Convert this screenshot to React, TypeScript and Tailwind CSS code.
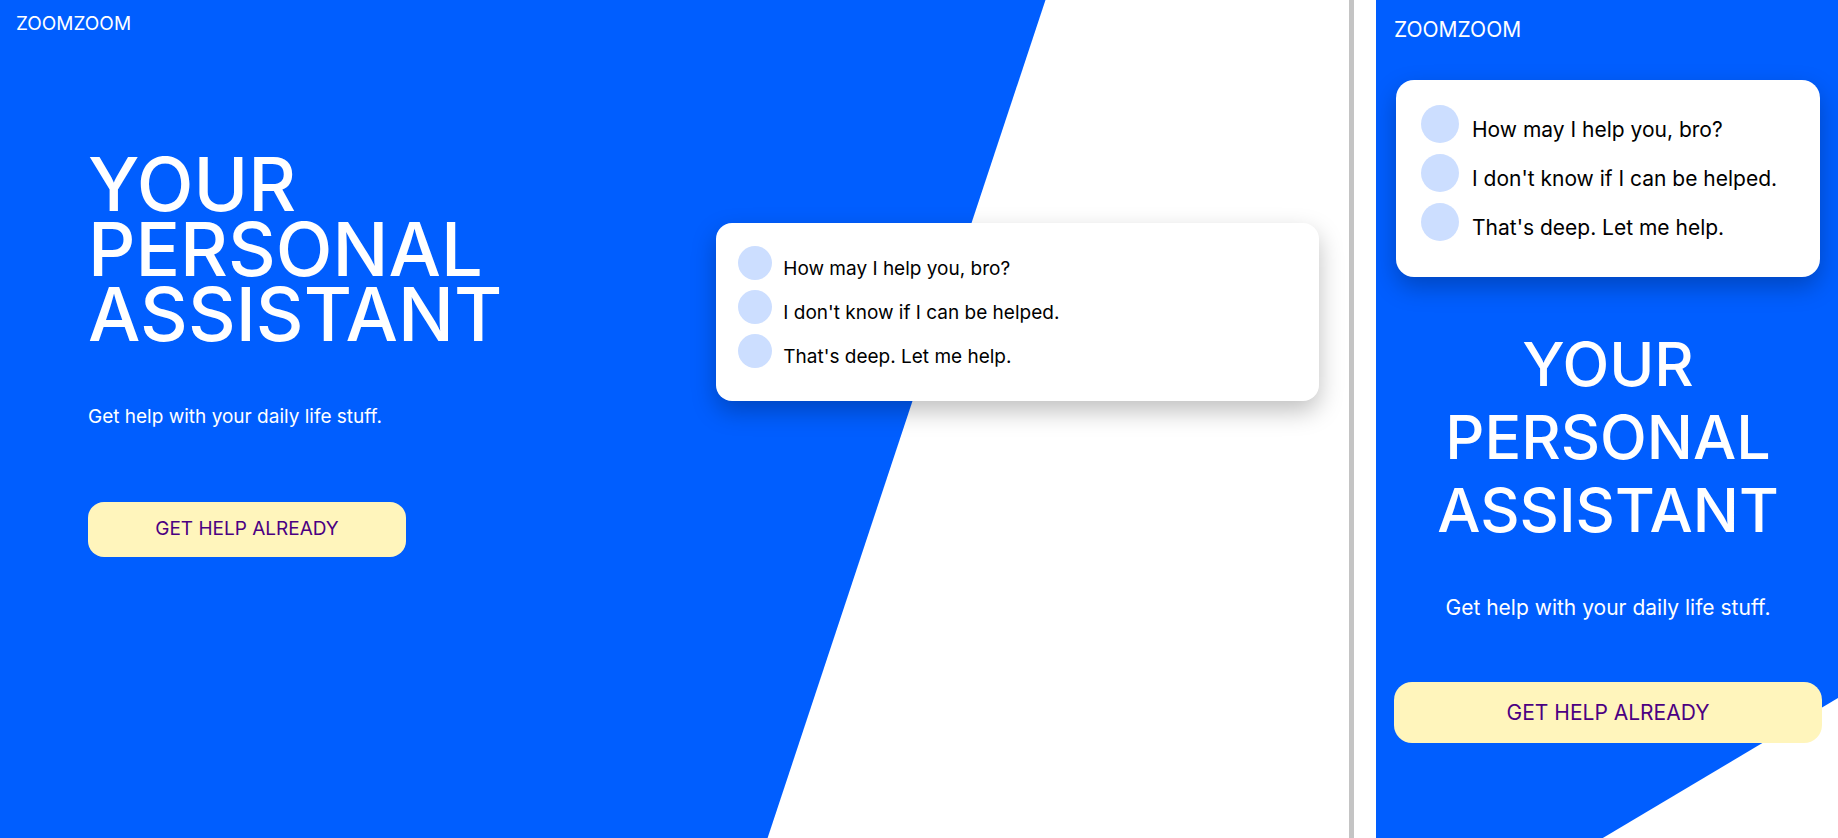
const messages = [
  "How may I help you, bro?",
  "I don't know if I can be helped.",
  "That's deep. Let me help.",
];

function DesktopHero() {
  return (
    <section className="relative isolate flex min-w-0 flex-1 flex-col overflow-hidden bg-white">
      <div className="absolute inset-0 -z-10 bg-[#005eff] [clip-path:polygon(0_0,77.5%_0,56.9%_100%,0_100%)]" />
      <header className="px-4 pt-3 text-[19px] leading-6 text-white">ZOOMZOOM</header>
      <div className="flex items-start">
        <div className="w-[53.1%] pt-[116px] pl-[88px] text-white">
          <h1 className="text-[74px] leading-[65px] font-medium">
            YOUR
            <br />
            PERSONAL
            <br />
            ASSISTANT
          </h1>
          <p className="mt-[58px] text-[19px] leading-6">Get help with your daily life stuff.</p>
          <button
            type="button"
            className="mt-[73px] h-[55px] w-[318px] rounded-2xl bg-[#fff5bc] text-[19px] text-[#4b0082]"
          >
            GET HELP ALREADY
          </button>
        </div>
        <ul className="mt-[187px] mr-[30px] flex flex-1 flex-col gap-[10px] rounded-2xl bg-white px-[22px] pt-[23px] pb-[33px] text-[19px] leading-6 text-black shadow-[0_10px_25px_rgba(0,0,0,0.25)]">
          {messages.map((message) => (
            <li key={message} className="flex h-[34px] items-start gap-[11px]">
              <span className="size-[34px] shrink-0 rounded-full bg-[#ccdeff]" />
              <span className="pt-[11px]">{message}</span>
            </li>
          ))}
        </ul>
      </div>
    </section>
  );
}

function MobileHero() {
  return (
    <section className="relative isolate flex w-[462px] shrink-0 flex-col overflow-hidden bg-white pt-[18px] pr-4 pl-[18px]">
      <div className="absolute inset-0 -z-10 bg-[#005eff] [clip-path:polygon(0_0,100%_0,100%_83.3%,49.1%_100%,0_100%)]" />
      <header className="text-[21px] leading-6 text-white">ZOOMZOOM</header>
      <ul className="mx-[2px] mt-[38px] flex flex-col gap-[11px] rounded-[18px] bg-white px-[25px] pt-[25px] pb-9 text-[21px] leading-6 text-black shadow-[0_10px_25px_rgba(0,0,0,0.25)]">
        {messages.map((message) => (
          <li key={message} className="flex h-[38px] items-start gap-[13px]">
            <span className="size-[38px] shrink-0 rounded-full bg-[#ccdeff]" />
            <span className="pt-[13px]">{message}</span>
          </li>
        ))}
      </ul>
      <h1 className="mt-[51px] text-center text-[61px] leading-[73px] font-medium text-white">
        YOUR
        <br />
        PERSONAL
        <br />
        ASSISTANT
      </h1>
      <p className="mt-[49px] text-center text-[21px] leading-6 text-white">
        Get help with your daily life stuff.
      </p>
      <button type="button" className="mt-[62px] h-[61px] rounded-[18px] bg-[#fff5bc] text-[21px] text-[#4b0082]">
        GET HELP ALREADY
      </button>
    </section>
  );
}

export default function App() {
  return (
    <main className="flex min-h-screen bg-white font-['Inter',sans-serif]">
      <DesktopHero />
      <div className="mr-[22px] w-[5px] shrink-0 bg-[#c4c4c4]" />
      <MobileHero />
    </main>
  );
}
